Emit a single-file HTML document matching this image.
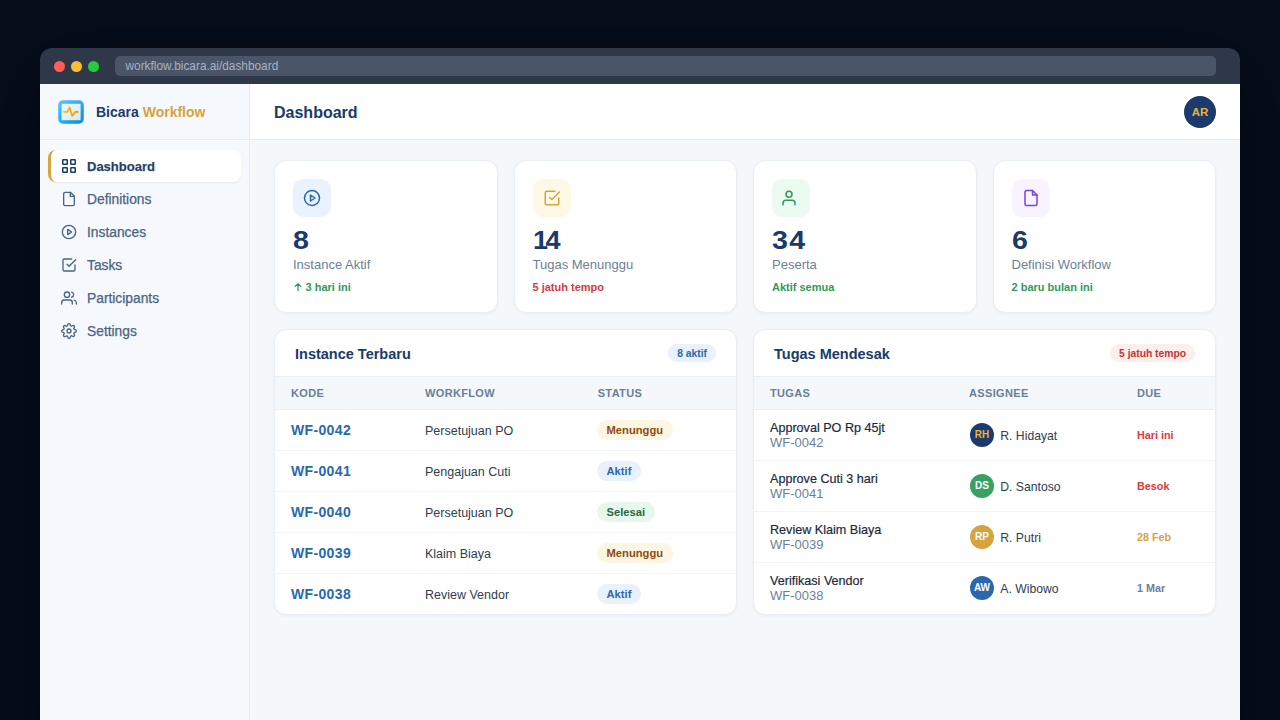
<!DOCTYPE html>
<html><head><meta charset="utf-8">
<style>
*{box-sizing:border-box;margin:0;padding:0}
html,body{width:1280px;height:720px;overflow:hidden;background:#060e1c;font-family:"Liberation Sans",sans-serif}
.a{position:absolute;white-space:nowrap}
.win{position:absolute;left:40px;top:48px;width:1200px;height:700px;border-radius:12px 12px 0 0;overflow:hidden;box-shadow:0 20px 80px rgba(0,0,0,.5)}
.tb{position:absolute;left:0;top:0;width:1200px;height:36px;background:#2e3848}
.dot{position:absolute;top:12.5px;width:11px;height:11px;border-radius:50%}
.url{position:absolute;left:75px;top:8px;width:1101px;height:20px;border-radius:5px;background:#4a5567}
.side{position:absolute;left:0;top:36px;width:210px;height:664px;background:#f5f8fc;border-right:1px solid #e6ebf1}
.main{position:absolute;left:210px;top:36px;width:990px;height:664px;background:#f4f8fb}
.hdr{position:absolute;left:0;top:0;width:990px;height:56px;background:#fff;border-bottom:1px solid #e6ebf1}
.shdr{position:absolute;left:0;top:0;width:209px;height:56px;border-bottom:1px solid #e6ebf1}
.nav{position:absolute;left:48px;width:193px;height:32px;border-radius:8px}
.nav.act{background:#fff;box-shadow:0 1px 2px rgba(15,30,60,.06);border-left:3px solid #d6a33e}
.ni{position:absolute;left:61px;width:16px;height:16px}
.nt{position:absolute;left:87px;font-size:13.8px;line-height:20px;color:#4a6482;-webkit-text-stroke:0.25px #4a6482}
.card{position:absolute;top:160px;width:223.5px;height:153px;box-shadow:0 1px 3px rgba(15,30,60,.05);background:#fff;border:1px solid #e9eef4;border-radius:12px}
.ib{position:absolute;left:18px;top:18px;width:38px;height:38px;border-radius:10px}
.ib svg{position:absolute;left:10px;top:10px}
.num{position:absolute;left:18px;top:63.7px;font-size:26px;line-height:30px;font-weight:700;color:#1a3a6b;transform-origin:0 0;transform:scaleX(1.1)}
.lbl{position:absolute;left:18px;top:95.7px;font-size:13px;line-height:16px;color:#6b7f98}
.sub{position:absolute;left:18px;top:119.2px;font-size:11px;line-height:14px;font-weight:700}
.tc{position:absolute;top:329px;width:463px;height:286px;box-shadow:0 1px 3px rgba(15,30,60,.05);background:#fff;border:1px solid #e9eef4;border-radius:12px;overflow:hidden}
.tt{position:absolute;left:20px;top:14.6px;font-size:14.5px;line-height:18px;font-weight:700;color:#1a3a6b}
.bdg{position:absolute;top:14px;height:18px;border-radius:9px;font-size:10.3px;line-height:20px;overflow:hidden;font-weight:700;padding:0 9px}
.th{position:absolute;left:0;top:46px;width:461px;height:34px;background:#f5f8fb;border-top:1px solid #e9eef4;border-bottom:1px solid #e9eef4}
.thl{position:absolute;top:9px;font-size:11px;line-height:14px;font-weight:700;color:#6b7f98;letter-spacing:.35px}
.row{position:absolute;left:0;width:461px;border-bottom:1px solid #f1f4f8}
.wf{position:absolute;left:16px;font-size:14px;line-height:18px;font-weight:700;color:#2a68ad;letter-spacing:.35px}
.wn{position:absolute;left:150px;font-size:12.5px;line-height:18px;color:#2f3d50}
.st{position:absolute;left:322px;height:20px;border-radius:10px;font-size:11.2px;line-height:20px;font-weight:700;padding:0 9.5px}
.s-w{background:#fdf6e3;color:#8f4a10}
.s-a{background:#e9f1fc;color:#2a68ad}
.s-d{background:#e8f7ee;color:#276a3f}
.tg{position:absolute;left:16px;font-size:12.6px;line-height:16px;color:#1e2a3b;-webkit-text-stroke:0.2px #1e2a3b}
.tgs{position:absolute;left:16px;font-size:13px;line-height:16px;color:#6b7f98}
.av{position:absolute;left:216px;width:24px;height:24px;border-radius:50%;font-size:10px;line-height:24px;font-weight:700;text-align:center;color:#fff}
.an{position:absolute;left:246.3px;font-size:12.2px;line-height:16px;color:#2f3d50}
.due{position:absolute;left:383px;font-size:10.8px;line-height:16px;font-weight:700}
</style></head><body>
<div class="win">
  <div class="tb">
    <div class="dot" style="left:14px;background:#fe5f57"></div>
    <div class="dot" style="left:31px;background:#febc2e"></div>
    <div class="dot" style="left:48px;background:#28c840"></div>
    <div class="url"></div>
  </div>
  <div class="side"><div class="shdr"></div></div>
  <div class="main"><div class="hdr"></div></div>
</div>

<div class="a" style="left:125.5px;top:56.2px;font-size:11.85px;line-height:20px;color:#a7b2c2">workflow.bicara.ai/dashboard</div>

<!-- logo -->
<svg class="a" style="left:58px;top:100px" width="26" height="24" viewBox="0 0 26 24">
  <defs>
    <linearGradient id="lg1" x1="0" y1="0" x2="1" y2="1"><stop offset="0" stop-color="#58c8fd"/><stop offset=".55" stop-color="#2aa6f6"/><stop offset="1" stop-color="#0b86e6"/></linearGradient>
    <linearGradient id="lg2" x1="0" y1="0" x2="1" y2="0"><stop offset="0" stop-color="#ffc107"/><stop offset="1" stop-color="#ff8a00"/></linearGradient>
    <linearGradient id="lg3" x1="0" y1="0" x2="1" y2="1"><stop offset="0" stop-color="#eef9f9"/><stop offset=".5" stop-color="#e3f3f4"/><stop offset="1" stop-color="#d3eaec"/></linearGradient>
  </defs>
  <rect x="0.2" y="0.2" width="25.6" height="23.6" rx="5" fill="url(#lg1)"/>
  <rect x="3.6" y="3.8" width="19" height="16.4" fill="url(#lg3)"/>
  <polyline points="5.9,11.8 9.4,11.8 11.6,7.4 14.2,15.9 17.2,11.8 19.8,11.8" fill="none" stroke="url(#lg2)" stroke-width="1.7" stroke-linejoin="round" stroke-linecap="round"/>
</svg>
<div class="a" style="left:96px;top:101.9px;font-size:14px;line-height:20px;font-weight:700;color:#1a3a6b">Bicara <span style="color:#d6a33e">Workflow</span></div>

<!-- nav -->
<div class="nav act" style="top:150px"></div>
<svg class="ni" style="top:158px" viewBox="0 0 16 16" fill="none" stroke="#1a3a6b" stroke-width="1.5"><rect x="1.75" y="1.75" width="4.5" height="4.5" rx=".5"/><rect x="9.75" y="1.75" width="4.5" height="4.5" rx=".5"/><rect x="1.75" y="9.75" width="4.5" height="4.5" rx=".5"/><rect x="9.75" y="9.75" width="4.5" height="4.5" rx=".5"/></svg>
<div class="nt" style="top:157.2px;font-size:13px;font-weight:700;color:#1a3a6b">Dashboard</div>

<svg class="ni" style="top:191px" viewBox="0 0 24 24" fill="none" stroke="#4a6482" stroke-width="2" stroke-linecap="round" stroke-linejoin="round"><path d="M14 2H6a2 2 0 0 0-2 2v16a2 2 0 0 0 2 2h12a2 2 0 0 0 2-2V8z"/><polyline points="14 2 14 8 20 8"/></svg>
<div class="nt" style="top:190.2px">Definitions</div>

<svg class="ni" style="top:224px" viewBox="0 0 24 24" fill="none" stroke="#4a6482" stroke-width="2" stroke-linecap="round" stroke-linejoin="round"><circle cx="12" cy="12" r="10"/><polygon points="10 8 16 12 10 16 10 8"/></svg>
<div class="nt" style="top:223.2px">Instances</div>

<svg class="ni" style="top:257px" viewBox="0 0 24 24" fill="none" stroke="#4a6482" stroke-width="2" stroke-linecap="round" stroke-linejoin="round"><polyline points="9 11 12 14 22 4"/><path d="M21 12v7a2 2 0 0 1-2 2H5a2 2 0 0 1-2-2V5a2 2 0 0 1 2-2h11"/></svg>
<div class="nt" style="top:256.2px">Tasks</div>

<svg class="ni" style="top:290px" viewBox="0 0 24 24" fill="none" stroke="#4a6482" stroke-width="2" stroke-linecap="round" stroke-linejoin="round"><path d="M17 21v-2a4 4 0 0 0-4-4H5a4 4 0 0 0-4 4v2"/><circle cx="9" cy="7" r="4"/><path d="M23 21v-2a4 4 0 0 0-3-3.87"/><path d="M16 3.13a4 4 0 0 1 0 7.75"/></svg>
<div class="nt" style="top:289.2px">Participants</div>

<svg class="ni" style="top:323px" viewBox="0 0 24 24" fill="none" stroke="#4a6482" stroke-width="2" stroke-linecap="round" stroke-linejoin="round"><circle cx="12" cy="12" r="3"/><path d="M19.4 15a1.65 1.65 0 0 0 .33 1.82l.06.06a2 2 0 0 1 0 2.83 2 2 0 0 1-2.83 0l-.06-.06a1.65 1.65 0 0 0-1.82-.33 1.65 1.65 0 0 0-1 1.51V21a2 2 0 0 1-2 2 2 2 0 0 1-2-2v-.09A1.65 1.65 0 0 0 9 19.4a1.65 1.65 0 0 0-1.82.33l-.06.06a2 2 0 0 1-2.830 0 2 2 0 0 1 0-2.83l.06-.06a1.65 1.65 0 0 0 .33-1.82 1.65 1.65 0 0 0-1.51-1H3a2 2 0 0 1-2-2 2 2 0 0 1 2-2h.09A1.65 1.65 0 0 0 4.6 9a1.65 1.65 0 0 0-.33-1.82l-.06-.06a2 2 0 0 1 0-2.83 2 2 0 0 1 2.83 0l.06.06a1.650 1.65 0 0 0 1.82.33H9a1.65 1.65 0 0 0 1-1.51V3a2 2 0 0 1 2-2 2 2 0 0 1 2 2v.09a1.65 1.65 0 0 0 1 1.51 1.65 1.65 0 0 0 1.82-.33l.06-.06a2 2 0 0 1 2.83 0 2 2 0 0 1 0 2.83l-.06.06a1.65 1.65 0 0 0-.33 1.82V9a1.65 1.65 0 0 0 1.51 1H21a2 2 0 0 1 2 2 2 2 0 0 1-2 2h-.09a1.65 1.65 0 0 0-1.51 1z"/></svg>
<div class="nt" style="top:322.2px">Settings</div>

<!-- header -->
<div class="a" style="left:274px;top:102.6px;font-size:16px;line-height:20px;font-weight:700;color:#1a3a6b">Dashboard</div>
<div class="a" style="left:1184px;top:96px;width:32px;height:32px;border-radius:50%;background:#1c3a6c;color:#e8b341;font-size:11.5px;line-height:32px;font-weight:700;text-align:center">AR</div>

<!-- stat cards -->
<div class="card" style="left:274px">
  <div class="ib" style="background:#eaf2fd"><svg width="18" height="18" viewBox="0 0 24 24" fill="none" stroke="#2a68ad" stroke-width="2" stroke-linecap="round" stroke-linejoin="round"><circle cx="12" cy="12" r="10"/><polygon points="10 8 16 12 10 16 10 8"/></svg></div>
  <div class="num">8</div>
  <div class="lbl">Instance Aktif</div>
  <div class="sub" style="color:#2f9a5a"><svg width="8" height="9" viewBox="0 0 8 9" style="vertical-align:0;margin-right:4px;margin-left:0.5px" fill="none" stroke="#2f9a5a" stroke-width="1.25" stroke-linecap="round" stroke-linejoin="round"><path d="M4 8.4V1.6M1.2 4.4 4 1.6 6.8 4.4"/></svg>3 hari ini</div>
</div>
<div class="card" style="left:513.5px">
  <div class="ib" style="background:#fef9e6"><svg width="18" height="18" viewBox="0 0 24 24" fill="none" stroke="#d6a33e" stroke-width="2" stroke-linecap="round" stroke-linejoin="round"><polyline points="9 11 12 14 22 4"/><path d="M21 12v7a2 2 0 0 1-2 2H5a2 2 0 0 1-2-2V5a2 2 0 0 1 2-2h11"/></svg></div>
  <div class="num" style="transform:scaleX(1.04);letter-spacing:-2.4px">14</div>
  <div class="lbl">Tugas Menunggu</div>
  <div class="sub" style="color:#d63a3a">5 jatuh tempo</div>
</div>
<div class="card" style="left:753px">
  <div class="ib" style="background:#ebfbf1"><svg width="18" height="18" style="left:8px" viewBox="0 0 24 24" fill="none" stroke="#2f9a5a" stroke-width="2" stroke-linecap="round" stroke-linejoin="round"><path d="M20 21v-2a4 4 0 0 0-4-4H8a4 4 0 0 0-4 4v2"/><circle cx="12" cy="7" r="4"/></svg></div>
  <div class="num" style="letter-spacing:1.2px">34</div>
  <div class="lbl">Peserta</div>
  <div class="sub" style="color:#2f9a5a">Aktif semua</div>
</div>
<div class="card" style="left:992.5px">
  <div class="ib" style="background:#f8f3fe"><svg width="18" height="18" viewBox="0 0 24 24" fill="none" stroke="#7a45d0" stroke-width="2" stroke-linecap="round" stroke-linejoin="round"><path d="M14 2H6a2 2 0 0 0-2 2v16a2 2 0 0 0 2 2h12a2 2 0 0 0 2-2V8z"/><polyline points="14 2 14 8 20 8"/></svg></div>
  <div class="num">6</div>
  <div class="lbl">Definisi Workflow</div>
  <div class="sub" style="color:#2f9a5a">2 baru bulan ini</div>
</div>

<!-- left table -->
<div class="tc" style="left:274px">
  <div class="tt">Instance Terbaru</div>
  <div class="bdg" style="right:20px;background:#e9f1fc;color:#2a68ad">8 aktif</div>
  <div class="th">
    <div class="thl" style="left:16px">KODE</div>
    <div class="thl" style="left:150px">WORKFLOW</div>
    <div class="thl" style="left:322.7px">STATUS</div>
  </div>
  <div class="row" style="top:80px;height:41px"><div class="wf" style="top:11.3px">WF-0042</div><div class="wn" style="top:12.2px">Persetujuan PO</div><div class="st s-w" style="top:10px">Menunggu</div></div>
  <div class="row" style="top:121px;height:41px"><div class="wf" style="top:11.3px">WF-0041</div><div class="wn" style="top:12.2px">Pengajuan Cuti</div><div class="st s-a" style="top:10px">Aktif</div></div>
  <div class="row" style="top:162px;height:41px"><div class="wf" style="top:11.3px">WF-0040</div><div class="wn" style="top:12.2px">Persetujuan PO</div><div class="st s-d" style="top:10px">Selesai</div></div>
  <div class="row" style="top:203px;height:41px"><div class="wf" style="top:11.3px">WF-0039</div><div class="wn" style="top:12.2px">Klaim Biaya</div><div class="st s-w" style="top:10px">Menunggu</div></div>
  <div class="row" style="top:244px;height:41px;border-bottom:0"><div class="wf" style="top:11.3px">WF-0038</div><div class="wn" style="top:12.2px">Review Vendor</div><div class="st s-a" style="top:10px">Aktif</div></div>
</div>

<!-- right table -->
<div class="tc" style="left:753px">
  <div class="tt">Tugas Mendesak</div>
  <div class="bdg" style="right:20px;background:#fdeeee;color:#c53333">5 jatuh tempo</div>
  <div class="th">
    <div class="thl" style="left:16px">TUGAS</div>
    <div class="thl" style="left:215px">ASSIGNEE</div>
    <div class="thl" style="left:383px">DUE</div>
  </div>
  <div class="row" style="top:80px;height:51px"><div class="tg" style="top:9.7px">Approval PO Rp 45jt</div><div class="tgs" style="top:24.8px">WF-0042</div><div class="av" style="top:13px;background:#1c3a6c;color:#e8b341">RH</div><div class="an" style="top:17.8px">R. Hidayat</div><div class="due" style="top:17px;color:#dc3b3b">Hari ini</div></div>
  <div class="row" style="top:131px;height:51px"><div class="tg" style="top:9.7px">Approve Cuti 3 hari</div><div class="tgs" style="top:24.8px">WF-0041</div><div class="av" style="top:13px;background:#36a163">DS</div><div class="an" style="top:17.8px">D. Santoso</div><div class="due" style="top:17px;color:#dc3b3b">Besok</div></div>
  <div class="row" style="top:182px;height:51px"><div class="tg" style="top:9.7px">Review Klaim Biaya</div><div class="tgs" style="top:24.8px">WF-0039</div><div class="av" style="top:13px;background:#d6a33e">RP</div><div class="an" style="top:17.8px">R. Putri</div><div class="due" style="top:17px;color:#d6a33e">28 Feb</div></div>
  <div class="row" style="top:233px;height:51px;border-bottom:0"><div class="tg" style="top:9.7px">Verifikasi Vendor</div><div class="tgs" style="top:24.8px">WF-0038</div><div class="av" style="top:13px;background:#2a68ad">AW</div><div class="an" style="top:17.8px">A. Wibowo</div><div class="due" style="top:17px;color:#6b7f98">1 Mar</div></div>
</div>
</body></html>
